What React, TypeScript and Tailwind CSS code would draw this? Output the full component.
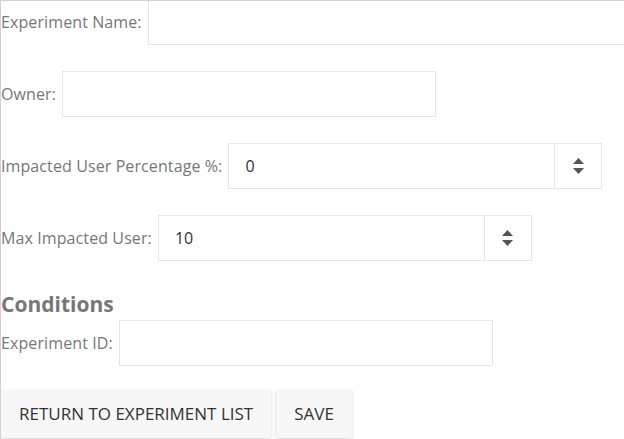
import { useState } from 'react'

function Spinner() {
  return (
    <div className="w-[47px] h-full border-l border-[#e6e6e6] flex flex-col items-center justify-center gap-[4px]">
      <svg width="11" height="6" viewBox="0 0 11 6">
        <path d="M5.5 0 L11 6 L0 6 Z" fill="#555" />
      </svg>
      <svg width="11" height="6" viewBox="0 0 11 6">
        <path d="M0 0 L11 0 L5.5 6 Z" fill="#555" />
      </svg>
    </div>
  )
}

function Field({
  label,
  value,
  number,
  wide,
}: {
  label: string
  value?: string
  number?: boolean
  wide?: boolean
}) {
  const [v, setV] = useState(value ?? '')
  return (
    <div className="flex items-center gap-[6px]">
      <label className="text-[16px] text-[#777] whitespace-nowrap tracking-[0.1px]">{label}</label>
      <div
        className={`h-[46px] flex items-center bg-white border border-[#e6e6e6] shrink-0 ${
          wide ? 'w-[500px]' : 'w-[374px]'
        }`}
      >
        <input
          value={v}
          onChange={(e) => setV(e.target.value)}
          className="flex-1 min-w-0 h-full px-[16px] text-[16px] text-[#333] outline-none bg-transparent"
        />
        {number && <Spinner />}
      </div>
    </div>
  )
}

export default function App() {
  return (
    <div className="min-h-[439px] w-[624px] overflow-hidden bg-white border-l border-t border-[#dccbdc] font-['Open_Sans',sans-serif]">
      <div className="-mt-[2px] flex flex-col gap-[26px]">
        <Field label="Experiment Name:" wide />
        <Field label="Owner:" />
        <Field label="Impacted User Percentage %:" value="0" number />
        <Field label="Max Impacted User:" value="10" number />
      </div>

      <h2 className="mt-[29px] text-[21px] leading-[28px] font-bold text-[#777]">Conditions</h2>
      <div className="mt-[2px]">
        <Field label="Experiment ID:" />
      </div>

      <div className="mt-[24px] flex gap-[5px]">
        <button className="h-[48px] px-[18px] bg-[#f7f7f7] text-[17px] text-[#333] shadow-[0_1px_3px_rgba(0,0,0,0.18)]">
          RETURN TO EXPERIMENT LIST
        </button>
        <button className="h-[48px] px-[18px] bg-[#f7f7f7] text-[17px] text-[#333] shadow-[0_1px_3px_rgba(0,0,0,0.18)]">
          SAVE
        </button>
      </div>
    </div>
  )
}
